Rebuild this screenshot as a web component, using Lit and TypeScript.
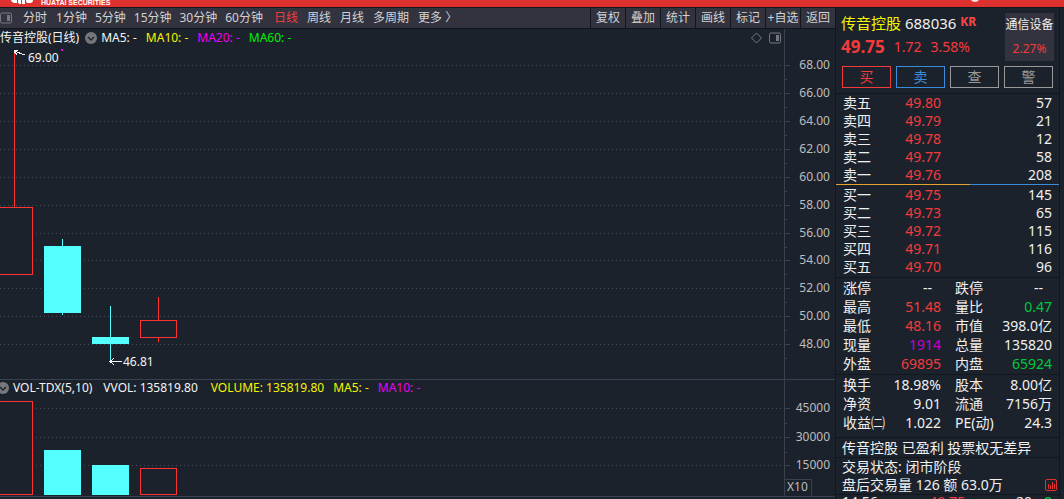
import { LitElement, html, svg, css } from "lit";
import { customElement } from "lit/decorators.js";

const GRID_TOP = 65;
const PRICES = [68, 66, 64, 62, 60, 58, 56, 54, 52, 50, 48];
const VOLUMES = [45000, 30000, 15000];

interface Candle {
  x: number;
  up: boolean;
  high: number;
  top: number;
  bottom: number;
  low: number;
  volume: number;
}

/* Vertical values are pixel rows inside the plot area. */
const CANDLES: Candle[] = [
  { x: -4, up: true, high: 3, top: 160, bottom: 228, low: 228, volume: 94 },
  { x: 44, up: false, high: 192, top: 199, bottom: 266, low: 268, volume: 45 },
  { x: 92, up: false, high: 259, top: 290, bottom: 297, low: 314, volume: 30 },
  { x: 140, up: true, high: 250, top: 273, bottom: 291, low: 295, volume: 27 },
];
const CANDLE_WIDTH = 37;

const priceY = (v: number) => Math.round(GRID_TOP + (68 - v) * 13.96);
const volumeY = (v: number) => Math.round(408 + (45000 - v) / 526);

const shared = css`
  :host,
  * {
    box-sizing: border-box;
  }
  button {
    margin: 0;
    padding: 0;
    border: 0;
    background: none;
    color: inherit;
    font: inherit;
    cursor: pointer;
    white-space: nowrap;
  }
  svg {
    display: block;
  }
`;

const panelIcon = html`<svg width="12" height="12" viewBox="0 0 12 12" aria-hidden="true">
  <rect x="0.5" y="1" width="11" height="10" rx="1.5" fill="none" stroke="#77787f" />
  <rect x="7" y="3" width="3" height="6" fill="#77787f" />
</svg>`;

const foldIcon = html`<svg width="12" height="12" viewBox="0 0 12 12" aria-hidden="true">
  <circle cx="6" cy="6" r="6" fill="#76777b" />
  <path d="M3 5 L6 8 L9 5" fill="none" stroke="#1c222c" stroke-width="1.3" />
</svg>`;

@customElement("top-banner")
export class TopBanner extends LitElement {
  static styles = [
    shared,
    css`
      :host {
        display: flex;
        align-items: flex-start;
        gap: 8px;
        height: 8px;
        padding-left: 11px;
        background: #e03131;
        border-bottom: 1px solid #12161d;
        overflow: hidden;
      }
      .brand {
        font: bold 7px/5px "Liberation Sans", sans-serif;
        color: #fff;
        white-space: nowrap;
      }
      .mark {
        flex: 1;
        display: flex;
        justify-content: flex-end;
        padding-right: 85px;
      }
    `,
  ];
  render() {
    return html`
      <svg width="22" height="4" viewBox="0 0 22 4" aria-hidden="true">
        <path d="M0 0H6V3H3Q0 2 0 0ZM7 0H10V4Q7 4 7 2ZM11 0H14V4H11ZM15 0H22Q22 3 19 3H16Q15 2 15 0Z" fill="#fff" />
      </svg>
      <span class="brand">HUATAI SECURITIES</span>
      <span class="mark"
        ><svg width="8" height="2" aria-hidden="true"><path d="M0 0H8Q7 2 4 2Q1 2 0 0Z" fill="#f7dcdc" /></svg
      ></span>
    `;
  }
}

@customElement("period-bar")
export class PeriodBar extends LitElement {
  static styles = [
    shared,
    css`
      :host {
        display: flex;
        align-items: stretch;
        height: 21px;
        background: #32333f;
        border-bottom: 1px solid #12161d;
        color: #d2d2d4;
      }
      nav {
        flex: 1;
        display: flex;
        align-items: center;
        gap: 9px;
        min-width: 0;
      }
      .minutes {
        display: flex;
        gap: 8px;
        margin-right: 2px;
      }
      .toggle {
        margin-right: 2px;
      }
      .active {
        color: #f43b3b;
      }
      .tools {
        display: flex;
      }
      .tools button {
        width: 35px;
        border-left: 1px solid #12161d;
        text-align: center;
      }
    `,
  ];
  render() {
    return html`
      <nav aria-label="周期">
        <button class="toggle" aria-label="侧栏">${panelIcon}</button>
        <button>分时</button>
        <div class="minutes">
          ${["1分钟", "5分钟", "15分钟", "30分钟", "60分钟"].map((t) => html`<button>${t}</button>`)}
        </div>
        <button class="active">日线</button>
        <button>周线</button>
        <button>月线</button>
        <button>多周期</button>
        <button>更多 〉</button>
      </nav>
      <div class="tools">
        ${["复权", "叠加", "统计", "画线", "标记", "+自选", "返回"].map((t) => html`<button>${t}</button>`)}
      </div>
    `;
  }
}

@customElement("kline-chart")
export class KlineChart extends LitElement {
  static styles = [
    shared,
    css`
      :host {
        display: block;
        min-width: 0;
      }
      .panel {
        display: grid;
        grid-template-columns: minmax(0, 1fr) 51px;
        border-bottom: 1px solid #39414e;
      }
      .legend {
        display: flex;
        align-items: center;
        gap: 9px;
        height: 18px;
        white-space: nowrap;
        color: #f4f4f4;
      }
      .legend.volume {
        height: 16px;
        margin-left: -3px;
      }
      .name {
        display: flex;
        align-items: center;
        gap: 6px;
        margin-right: -5px;
      }
      .volume .name {
        gap: 4px;
        margin-right: 2px;
      }
      .corner {
        flex: 1;
        display: flex;
        justify-content: flex-end;
        gap: 7px;
        padding-right: 3px;
      }
      .yellow {
        color: #f5f500;
      }
      .magenta {
        color: #f000f0;
      }
      .green {
        color: #00f000;
      }
      .total {
        margin-right: 4px;
      }
      .plot {
        width: 100%;
        shape-rendering: crispEdges;
      }
      .axis {
        width: 100%;
        shape-rendering: crispEdges;
      }
      .axis text {
        fill: #bcbdbf;
        text-anchor: end;
      }
      .axis .unit {
        text-anchor: start;
      }
      .note {
        fill: #f4f4f4;
      }
      .grid {
        stroke: #454b57;
        stroke-dasharray: 1 3;
      }
      .tick {
        fill: #39414e;
      }
    `,
  ];

  private box(c: Candle, top: number, bottom: number) {
    return c.up
      ? svg`<rect x=${c.x + 0.5} y=${top + 0.5} width=${CANDLE_WIDTH - 1} height=${bottom - top - 1} fill="#1c222c" stroke="#ff3232" />`
      : svg`<rect x=${c.x} y=${top} width=${CANDLE_WIDTH} height=${bottom - top} fill="#54ffff" />`;
  }

  private candle(c: Candle) {
    return svg`
      <rect x=${c.x + 18} y=${c.high} width="1" height=${c.low - c.high} fill=${c.up ? "#ff3232" : "#54ffff"} />
      ${this.box(c, c.top, c.bottom)}`;
  }

  private grid(y: number) {
    return svg`<line class="grid" x1="0" x2="100%" y1=${y + 0.5} y2=${y + 0.5} />`;
  }

  private ticks(rows: number[], half: number, origin: number) {
    return rows.map(
      (y) => svg`
        <rect class="tick" x="1" y=${y - origin} width="5" height="1" />
        <rect class="tick" x="1" y=${y - origin + half} width="2" height="1" />`
    );
  }

  render() {
    return html`
      <section class="panel">
        <div>
          <div class="legend">
            <span class="name">传音控股(日线)${foldIcon}</span>
            <span>MA5: -</span>
            <span class="yellow">MA10: -</span>
            <span class="magenta">MA20: -</span>
            <span class="green">MA60: -</span>
            <span class="corner">
              <svg width="11" height="12" viewBox="0 0 11 12" aria-hidden="true">
                <path d="M5.5 1 L10.5 6 L5.5 11 L0.5 6Z" fill="none" stroke="#77787f" />
              </svg>
              ${panelIcon}
            </span>
          </div>
          <svg class="plot" height="332" role="img" aria-label="日线">
            ${PRICES.map((p) => this.grid(priceY(p) - 47))} ${CANDLES.map((c) => this.candle(c))}
            <rect x="14" y="3" width="2" height="1" fill="#f000f0" />
            <rect x="61" y="2" width="2" height="2" fill="#f000f0" />
            <path d="M14 4 L25 8 M18 3 L14 4 L17 8" fill="none" stroke="#f4f4f4" />
            <text class="note" x="28" y="15">69.00</text>
            <path d="M110 314.5 H122 M114 311 L110 314.5 L114 318" fill="none" stroke="#f4f4f4" />
            <text class="note" x="123" y="319">46.81</text>
          </svg>
        </div>
        <svg class="axis" height="350">
          <rect class="tick" width="1" height="350" />
          ${this.ticks(PRICES.map(priceY), 14, 29)}
          ${PRICES.map((p) => svg`<text x="46" y=${priceY(p) - 25}>${p.toFixed(2)}</text>`)}
        </svg>
      </section>
      <section class="panel">
        <div>
          <div class="legend volume">
            <span class="name">${foldIcon}VOL-TDX(5,10)</span>
            <span class="total">VVOL: 135819.80</span>
            <span class="yellow">VOLUME: 135819.80</span>
            <span class="yellow">MA5: -</span>
            <span class="magenta">MA10: -</span>
          </div>
          <svg class="plot" height="100" role="img" aria-label="成交量">
            ${VOLUMES.map((v) => this.grid(volumeY(v) - 396))}
            ${CANDLES.map((c) => this.box(c, 99 - c.volume, 99))}
          </svg>
        </div>
        <svg class="axis" height="116">
          <rect class="tick" width="1" height="116" />
          ${this.ticks(VOLUMES.map(volumeY), 15, 380)}
          ${VOLUMES.map((v) => svg`<text x="46" y=${volumeY(v) - 376}>${v}</text>`)}
          <rect x="0.5" y="99.5" width="27" height="17" fill="#1c222c" stroke="#39414e" />
          <text class="unit" x="3" y="111">X10</text>
        </svg>
      </section>
    `;
  }
}

type Cell = [label: string, value: string, tone?: string];

const SELLS: [string, string, number][] = [
  ["卖五", "49.80", 57],
  ["卖四", "49.79", 21],
  ["卖三", "49.78", 12],
  ["卖二", "49.77", 58],
  ["卖一", "49.76", 208],
];
const BUYS: [string, string, number][] = [
  ["买一", "49.75", 145],
  ["买二", "49.73", 65],
  ["买三", "49.72", 115],
  ["买四", "49.71", 116],
  ["买五", "49.70", 96],
];
const TRADES: [Cell, Cell][] = [
  [["涨停", "--", "blank"], ["跌停", "--", "blank"]],
  [["最高", "51.48", "up"], ["量比", "0.47", "down"]],
  [["最低", "48.16", "up"], ["市值", "398.0亿"]],
  [["现量", "1914", "purple"], ["总量", "135820"]],
  [["外盘", "69895", "up"], ["内盘", "65924", "down"]],
];
const FACTS: [Cell, Cell][] = [
  [["换手", "18.98%"], ["股本", "8.00亿"]],
  [["净资", "9.01"], ["流通", "7156万"]],
  [["收益㈡", "1.022"], ["PE(动)", "24.3"]],
];
const SELL_SHARE = 60;

@customElement("quote-panel")
export class QuotePanel extends LitElement {
  static styles = [
    shared,
    css`
      :host {
        display: block;
        border: solid #12161d;
        border-width: 0 1px;
        font-size: 14px;
        line-height: 18px;
        color: #f0f0f0;
        white-space: nowrap;
      }
      header {
        display: grid;
        grid-template-columns: 1fr 49px;
        padding: 5px 5px 5px 5px;
      }
      h1 {
        margin: 0;
        font-size: 15px;
        font-weight: normal;
        line-height: 20px;
      }
      .stock {
        color: #f5f500;
      }
      .tag {
        font: bold 12px/10px "Noto Sans", sans-serif;
        vertical-align: 3px;
        color: #f84848;
      }
      .quote {
        display: flex;
        align-items: center;
        gap: 9px;
        height: 28px;
        color: #f43b3b;
      }
      .last {
        font-size: 17px;
        font-weight: bold;
      }
      .sector {
        display: flex;
        flex-direction: column;
        justify-content: space-around;
        align-items: center;
        height: 48px;
        background: #32333f;
        color: #f0f0f0;
        font-size: 12px;
        text-decoration: none;
      }
      .actions {
        display: grid;
        grid-template-columns: repeat(4, 1fr);
        gap: 5px;
        padding: 0 6px 5px 6px;
      }
      .actions button {
        height: 22px;
        border: 1px solid currentColor;
        color: #999;
        font-size: 14px;
        line-height: 18px;
      }
      .actions .buy {
        color: #f43b3b;
      }
      .actions .sell {
        color: #3c8cdc;
      }
      section {
        padding: 0 7px;
        border-top: 1px solid #12161d;
      }
      .news {
        padding-left: 6px;
      }
      table {
        width: 100%;
        table-layout: fixed;
        border-collapse: collapse;
      }
      .label {
        width: 42px;
      }
      .value {
        width: 56px;
      }
      .second {
        width: 56px;
      }
      .count {
        width: 67px;
      }
      .tail {
        width: 20px;
      }
      th,
      td {
        padding: 0;
        height: 18px;
        font-weight: normal;
        text-align: right;
      }
      th {
        text-align: left;
      }
      .stats th,
      .stats td {
        height: 19px;
      }
      .ticker th,
      .ticker td {
        height: 14px;
        line-height: 14px;
      }
      .stats td + th {
        padding-left: 14px;
      }
      .trades {
        padding-bottom: 1px;
      }
      .facts {
        padding-bottom: 5px;
      }
      .split {
        display: flex;
        height: 1px;
        margin: 0 -7px 1px;
        background: #3c8cdc;
      }
      .share {
        background: #e6a12e;
      }
      .book {
        padding-bottom: 1px;
      }
      .up {
        color: #f43b3b;
      }
      .down {
        color: #00c83c;
      }
      .purple {
        color: #c800c8;
      }
      .stats .blank {
        padding-right: 9px;
      }
      p {
        margin: 0;
      }
      .notice {
        line-height: 19px;
      }
      .after {
        display: flex;
        justify-content: space-between;
        align-items: center;
        margin-right: -5px;
      }
    `,
  ];

  private orders(rows: [string, string, number][], name: string) {
    return html`<table aria-label=${name}>
      <colgroup>
        <col class="label" />
        <col class="value" />
        <col />
      </colgroup>
      <tbody>
        ${rows.map(
          ([n, p, q]) => html`<tr>
            <th scope="row">${n}</th>
            <td class="up">${p}</td>
            <td>${q}</td>
          </tr>`
        )}
      </tbody>
    </table>`;
  }

  private stats(rows: [Cell, Cell][]) {
    return html`<table class="stats">
      <colgroup>
        <col class="label" />
        <col class="value" />
        <col class="second" />
        <col />
      </colgroup>
      <tbody>
        ${rows.map(
          (pair) => html`<tr>
            ${pair.map(([l, v, t]) => html`<th scope="row">${l}</th><td class=${t ?? ""}>${v}</td>`)}
          </tr>`
        )}
      </tbody>
    </table>`;
  }

  render() {
    return html`
      <header>
        <div>
          <h1><span class="stock">传音控股</span> 688036 <span class="tag">KR</span></h1>
          <div class="quote"><span class="last">49.75</span><span>1.72</span><span>3.58%</span></div>
        </div>
        <a class="sector" href="#sector"><span>通信设备</span><span class="up">2.27%</span></a>
      </header>
      <div class="actions">
        <button class="buy">买</button>
        <button class="sell">卖</button>
        <button>查</button>
        <button>警</button>
      </div>
      <section class="book">
        ${this.orders(SELLS, "卖盘")}
        <div class="split"><span class="share" style="width:${SELL_SHARE}%"></span></div>
        ${this.orders(BUYS, "买盘")}
      </section>
      <section class="trades">${this.stats(TRADES)}</section>
      <section class="facts">${this.stats(FACTS)}</section>
      <section class="news"><p class="notice">传音控股 已盈利 投票权无差异</p></section>
      <section class="news">
        <p>交易状态: 闭市阶段</p>
        <p class="after">
          盘后交易量 126 额 63.0万
          <svg width="12" height="12" viewBox="0 0 12 12" aria-hidden="true">
            <rect x="0.5" y="0.5" width="11" height="11" rx="1.5" fill="none" stroke="#e03131" />
            <path d="M3.5 5V10M5.5 6V10M7.5 3V10M9.5 5V10" stroke="#e03131" />
          </svg>
        </p>
      </section>
      <section class="news">
        <table class="ticker" aria-label="成交明细">
          <colgroup>
            <col class="label" />
            <col />
            <col class="count" />
            <col class="tail" />
          </colgroup>
          <tbody>
            <tr>
              <th scope="row">14:56</th>
              <td class="up">49.75</td>
              <td>20</td>
              <td class="down">8</td>
            </tr>
          </tbody>
        </table>
      </section>
    `;
  }
}

@customElement("app-root")
export class AppRoot extends LitElement {
  static styles = css`
    :host {
      display: flex;
      flex-direction: column;
      height: 100vh;
      overflow: hidden;
      background: #1c222c;
      font-family: "Noto Sans", "Noto Sans CJK SC", sans-serif;
      font-size: 12px;
      line-height: 16px;
    }
    main {
      flex: 1;
      display: grid;
      grid-template-columns: minmax(0, 1fr) 225px;
      min-height: 0;
      padding-right: 4px;
    }
  `;
  render() {
    return html`
      <top-banner></top-banner>
      <main>
        <div>
          <period-bar></period-bar>
          <kline-chart></kline-chart>
        </div>
        <quote-panel></quote-panel>
      </main>
    `;
  }
}
